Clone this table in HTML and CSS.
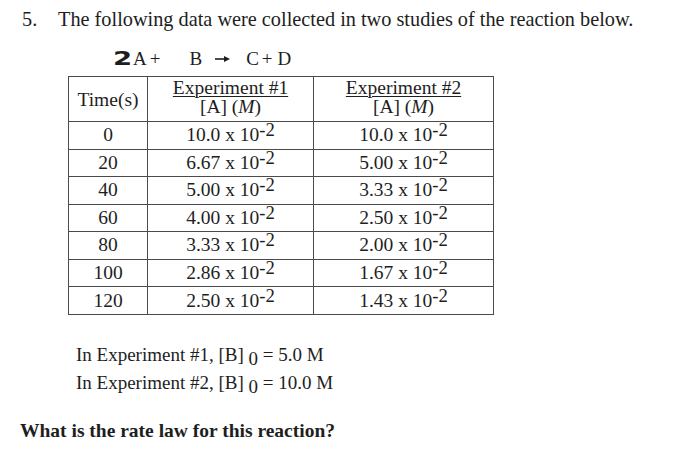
FILE: index.html
```html
<!DOCTYPE html>
<html>
<head>
<meta charset="utf-8">
<link rel="stylesheet" href="styles.css">
</head>
<body>
<div class="page">
  <div class="question">
    <span class="num">5.</span>
    <span class="qtext">The following data were collected in two studies of the reaction below.</span>
  </div>
  <div class="rxn"><span class="two">2</span><span class="sp">A</span><span class="sp g3">+</span><span class="sp g29">B</span><svg class="arrow" width="16" height="8" viewBox="0 0 16 8"><path d="M0 4 H11" stroke="#1e1e1e" stroke-width="1.6"/><path d="M9 1 L15 4 L9 7 Z" fill="#1e1e1e"/></svg><span class="sp g16">C</span><span class="sp g3">+</span><span class="sp g5">D</span></div>
  <table class="data">
    <colgroup><col class="c1"><col class="c2"><col class="c3"></colgroup>
    <thead>
      <tr class="head">
        <th class="time">Time(s)</th>
        <th><span class="u">Experiment #1</span><br>[A] (<i>M</i>)</th>
        <th><span class="u">Experiment #2</span><br>[A] (<i>M</i>)</th>
      </tr>
    </thead>
    <tbody>
      <tr><td>0</td><td>10.0 x 10<sup>-2</sup></td><td>10.0 x 10<sup>-2</sup></td></tr>
      <tr><td>20</td><td>6.67 x 10<sup>-2</sup></td><td>5.00 x 10<sup>-2</sup></td></tr>
      <tr><td>40</td><td>5.00 x 10<sup>-2</sup></td><td>3.33 x 10<sup>-2</sup></td></tr>
      <tr><td>60</td><td>4.00 x 10<sup>-2</sup></td><td>2.50 x 10<sup>-2</sup></td></tr>
      <tr><td>80</td><td>3.33 x 10<sup>-2</sup></td><td>2.00 x 10<sup>-2</sup></td></tr>
      <tr><td>100</td><td>2.86 x 10<sup>-2</sup></td><td>1.67 x 10<sup>-2</sup></td></tr>
      <tr><td>120</td><td>2.50 x 10<sup>-2</sup></td><td>1.43 x 10<sup>-2</sup></td></tr>
    </tbody>
  </table>
  <div class="notes">
    <p>In Experiment #1, [B]<sub>&nbsp;0</sub> <span class="eq">= 5.0 M</span></p>
    <p>In Experiment #2, [B]<sub>&nbsp;0</sub> <span class="eq">= 10.0 M</span></p>
  </div>
  <p class="ask">What is the rate law for this reaction?</p>
</div>
</body>
</html>
```

FILE: styles.css
```css
html, body {
  margin: 0;
  padding: 0;
  background: #ffffff;
}
.page {
  width: 700px;
  height: 457px;
  overflow: hidden;
  color: #1e1e1e;
  font-family: "Liberation Serif", "Times New Roman", serif;
}
.question {
  display: flex;
  padding: 7px 0 0 22px;
  font-size: 20.3px;
  line-height: 24px;
}
.num {
  width: 36px;
}
.rxn {
  margin: 18px 0 0 113px;
  font-size: 19px;
  line-height: 20px;
  height: 20px;
  white-space: nowrap;
}
.two {
  display: inline-block;
  font-family: "DejaVu Sans", sans-serif;
  font-weight: bold;
  font-size: 19px;
  line-height: 0;
  width: 20px;
  transform: scaleX(1.45);
  transform-origin: left center;
}
.sp { display: inline-block; line-height: 20px; }
.g3 { margin-left: 3px; }
.g5 { margin-left: 5px; }
.g16 { margin-left: 15px; }
.g29 { margin-left: 29px; }
.arrow {
  margin-left: 13px;
  vertical-align: 2px;
}
table.data {
  margin: 7px 0 0 68px;
  border-collapse: collapse;
  width: 425px;
  table-layout: fixed;
  font-size: 19.5px;
}
col.c1 { width: 79px; }
col.c2 { width: 166px; }
col.c3 { width: 180px; }
table.data th,
table.data td {
  border: 1px solid #4a4a4a;
  text-align: center;
  padding: 0;
  font-weight: normal;
}
tr.head th {
  height: 43px;
  line-height: 19px;
  vertical-align: top;
  padding-top: 1px;
}
tr.head th.time {
  vertical-align: middle;
  padding-top: 0;
}
tbody td {
  height: 26.55px;
  line-height: 20px;
  vertical-align: middle;
}
.u {
  text-decoration: underline;
  text-underline-offset: 2px;
  text-decoration-thickness: 1px;
}
sup {
  font-size: 0.96em;
  line-height: 0;
  vertical-align: 5px;
}
.notes {
  margin: 26px 0 0 76px;
  font-size: 19px;
}
.notes p {
  margin: 0;
  line-height: 28px;
}
sub {
  font-size: 19px;
  line-height: 0;
  vertical-align: -4px;
}
.eq {
  font-size: 19px;
}
.ask {
  margin: 22px 0 0 20px;
  font-size: 19.5px;
  line-height: 24px;
  font-weight: bold;
}
```
